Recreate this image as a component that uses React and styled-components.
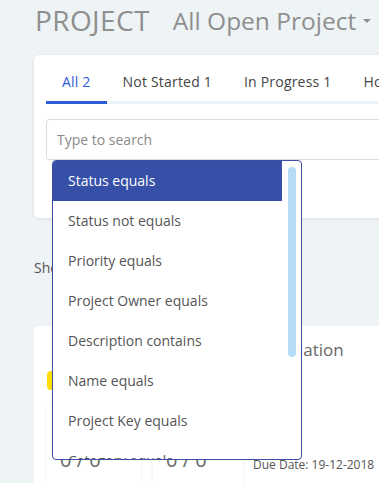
import React from "react";
import styled, { createGlobalStyle } from "styled-components";

const Global = createGlobalStyle`
  html, body {
    margin: 0;
    padding: 0;
    background: #eef3f6;
    overflow: hidden;
    font-family: "Open Sans", "Noto Sans", Arial, sans-serif;
  }
`;

const Page = styled.div`
  position: relative;
  width: 379px;
  height: 483px;
  overflow: hidden;
  padding-left: 34px;
  box-sizing: border-box;
`;

const TitleRow = styled.div`
  display: flex;
  align-items: center;
  gap: 23px;
  height: 40px;
  padding-left: 1px;
  color: #8f8f8f;
  white-space: nowrap;
`;

const Heading = styled.span`
  font-size: 28px;
  letter-spacing: 0.4px;
`;

const Filter = styled.span`
  font-size: 24.5px;
  display: flex;
  align-items: center;
`;

const Caret = styled.span`
  display: inline-block;
  margin-left: 7px;
  margin-top: 2px;
  border-left: 4px solid transparent;
  border-right: 4px solid transparent;
  border-top: 4px solid #8f8f8f;
`;

const Card = styled.div`
  width: 640px;
  margin-top: 15px;
  background: #fff;
  border-radius: 5px;
  box-shadow: 0 1px 4px rgba(0, 0, 0, 0.08);
  padding: 12px 12px 58px;
  box-sizing: border-box;
`;

const Tabs = styled.div`
  display: flex;
  border-bottom: 3px solid #eef3f8;
`;

const Tab = styled.div`
  padding: 5px 16px 9px;
  margin-bottom: -3px;
  font-size: 14px;
  line-height: 20px;
  letter-spacing: 0.2px;
  white-space: nowrap;
  color: ${(p) => (p.active ? "#2d5ad6" : "#444")};
  border-bottom: 3px solid ${(p) => (p.active ? "#2d5ad6" : "transparent")};
`;

const Search = styled.div`
  margin-top: 15px;
  height: 41px;
  border: 1px solid #dcdcdc;
  border-radius: 4px;
  box-sizing: border-box;
  display: flex;
  align-items: center;
  padding-left: 10px;
  color: #8a8a8a;
  font-size: 14px;
`;

const ShowText = styled.div`
  margin-top: 40px;
  color: #555;
  font-size: 14px;
  height: 20px;
  line-height: 20px;
`;

const ProjectCard = styled.div`
  width: 640px;
  margin-top: 48px;
  background: #fff;
  border-radius: 5px;
  padding: 13px 13px 0;
  box-sizing: border-box;
  height: 200px;
  display: grid;
  grid-template-columns: 206px 1fr;
`;

const Left = styled.div`
  display: flex;
  flex-direction: column;
  padding-top: 32px;
`;

const Badge = styled.div`
  width: 70px;
  height: 19px;
  background: #ffdd00;
  border-radius: 4px;
`;

const Stats = styled.div`
  display: flex;
  gap: 12px;
  margin-top: 16px;
`;

const Stat = styled.div`
  width: ${(p) => p.w}px;
  height: 90px;
  background: #fff;
  border-radius: 4px;
  box-shadow: 0 0 4px rgba(0, 0, 0, 0.07);
  padding: 40px 0 0 13px;
  box-sizing: border-box;
  font-size: 20px;
  color: #666;
`;

const Right = styled.div`
  display: flex;
  flex-direction: column;
`;

const ProjectName = styled.div`
  font-size: 17px;
  color: #666;
  line-height: 22px;
  white-space: nowrap;
`;

const DueDate = styled.div`
  margin-top: 95px;
  font-size: 12px;
  color: #555;
  white-space: nowrap;
`;

const Dropdown = styled.div`
  position: absolute;
  left: 52px;
  top: 160px;
  width: 250px;
  height: 300px;
  border: 1px solid #3c4fa3;
  border-radius: 4px;
  background: #fff;
  box-sizing: border-box;
  overflow: hidden;
`;

const Item = styled.div`
  height: 40px;
  width: 229px;
  padding: 0 0 2px 15px;
  box-sizing: border-box;
  display: flex;
  align-items: center;
  font-size: 14px;
  white-space: nowrap;
  color: ${(p) => (p.active ? "#fff" : "#555")};
  background: ${(p) => (p.active ? "#3550a6" : "transparent")};
`;

const Thumb = styled.div`
  position: absolute;
  left: 235px;
  top: 6px;
  width: 8px;
  height: 190px;
  border-radius: 4px;
  background: #b4dcf6;
`;

const options = [
  "Status equals",
  "Status not equals",
  "Priority equals",
  "Project Owner equals",
  "Description contains",
  "Name equals",
  "Project Key equals",
  "Category equals",
];

export default function App() {
  return (
    <Page>
      <Global />
      <TitleRow>
        <Heading>PROJECT</Heading>
        <Filter>
          All Open Project
          <Caret />
        </Filter>
      </TitleRow>
      <Card>
        <Tabs>
          <Tab active>All 2</Tab>
          <Tab>Not Started 1</Tab>
          <Tab>In Progress 1</Tab>
          <Tab>Hold 0</Tab>
        </Tabs>
        <Search>Type to search</Search>
      </Card>
      <ShowText>Showing 2 projects</ShowText>
      <ProjectCard>
        <Left>
          <Badge />
          <Stats>
            <Stat w={94}>0 / 0</Stat>
            <Stat w={90}>0 / 0</Stat>
          </Stats>
        </Left>
        <Right>
          <ProjectName>Foundation</ProjectName>
          <DueDate>Due Date: 19-12-2018</DueDate>
        </Right>
      </ProjectCard>
      <Dropdown>
        {options.map((o, i) => (
          <Item key={o} active={i === 0}>
            {o}
          </Item>
        ))}
        <Thumb />
      </Dropdown>
    </Page>
  );
}
